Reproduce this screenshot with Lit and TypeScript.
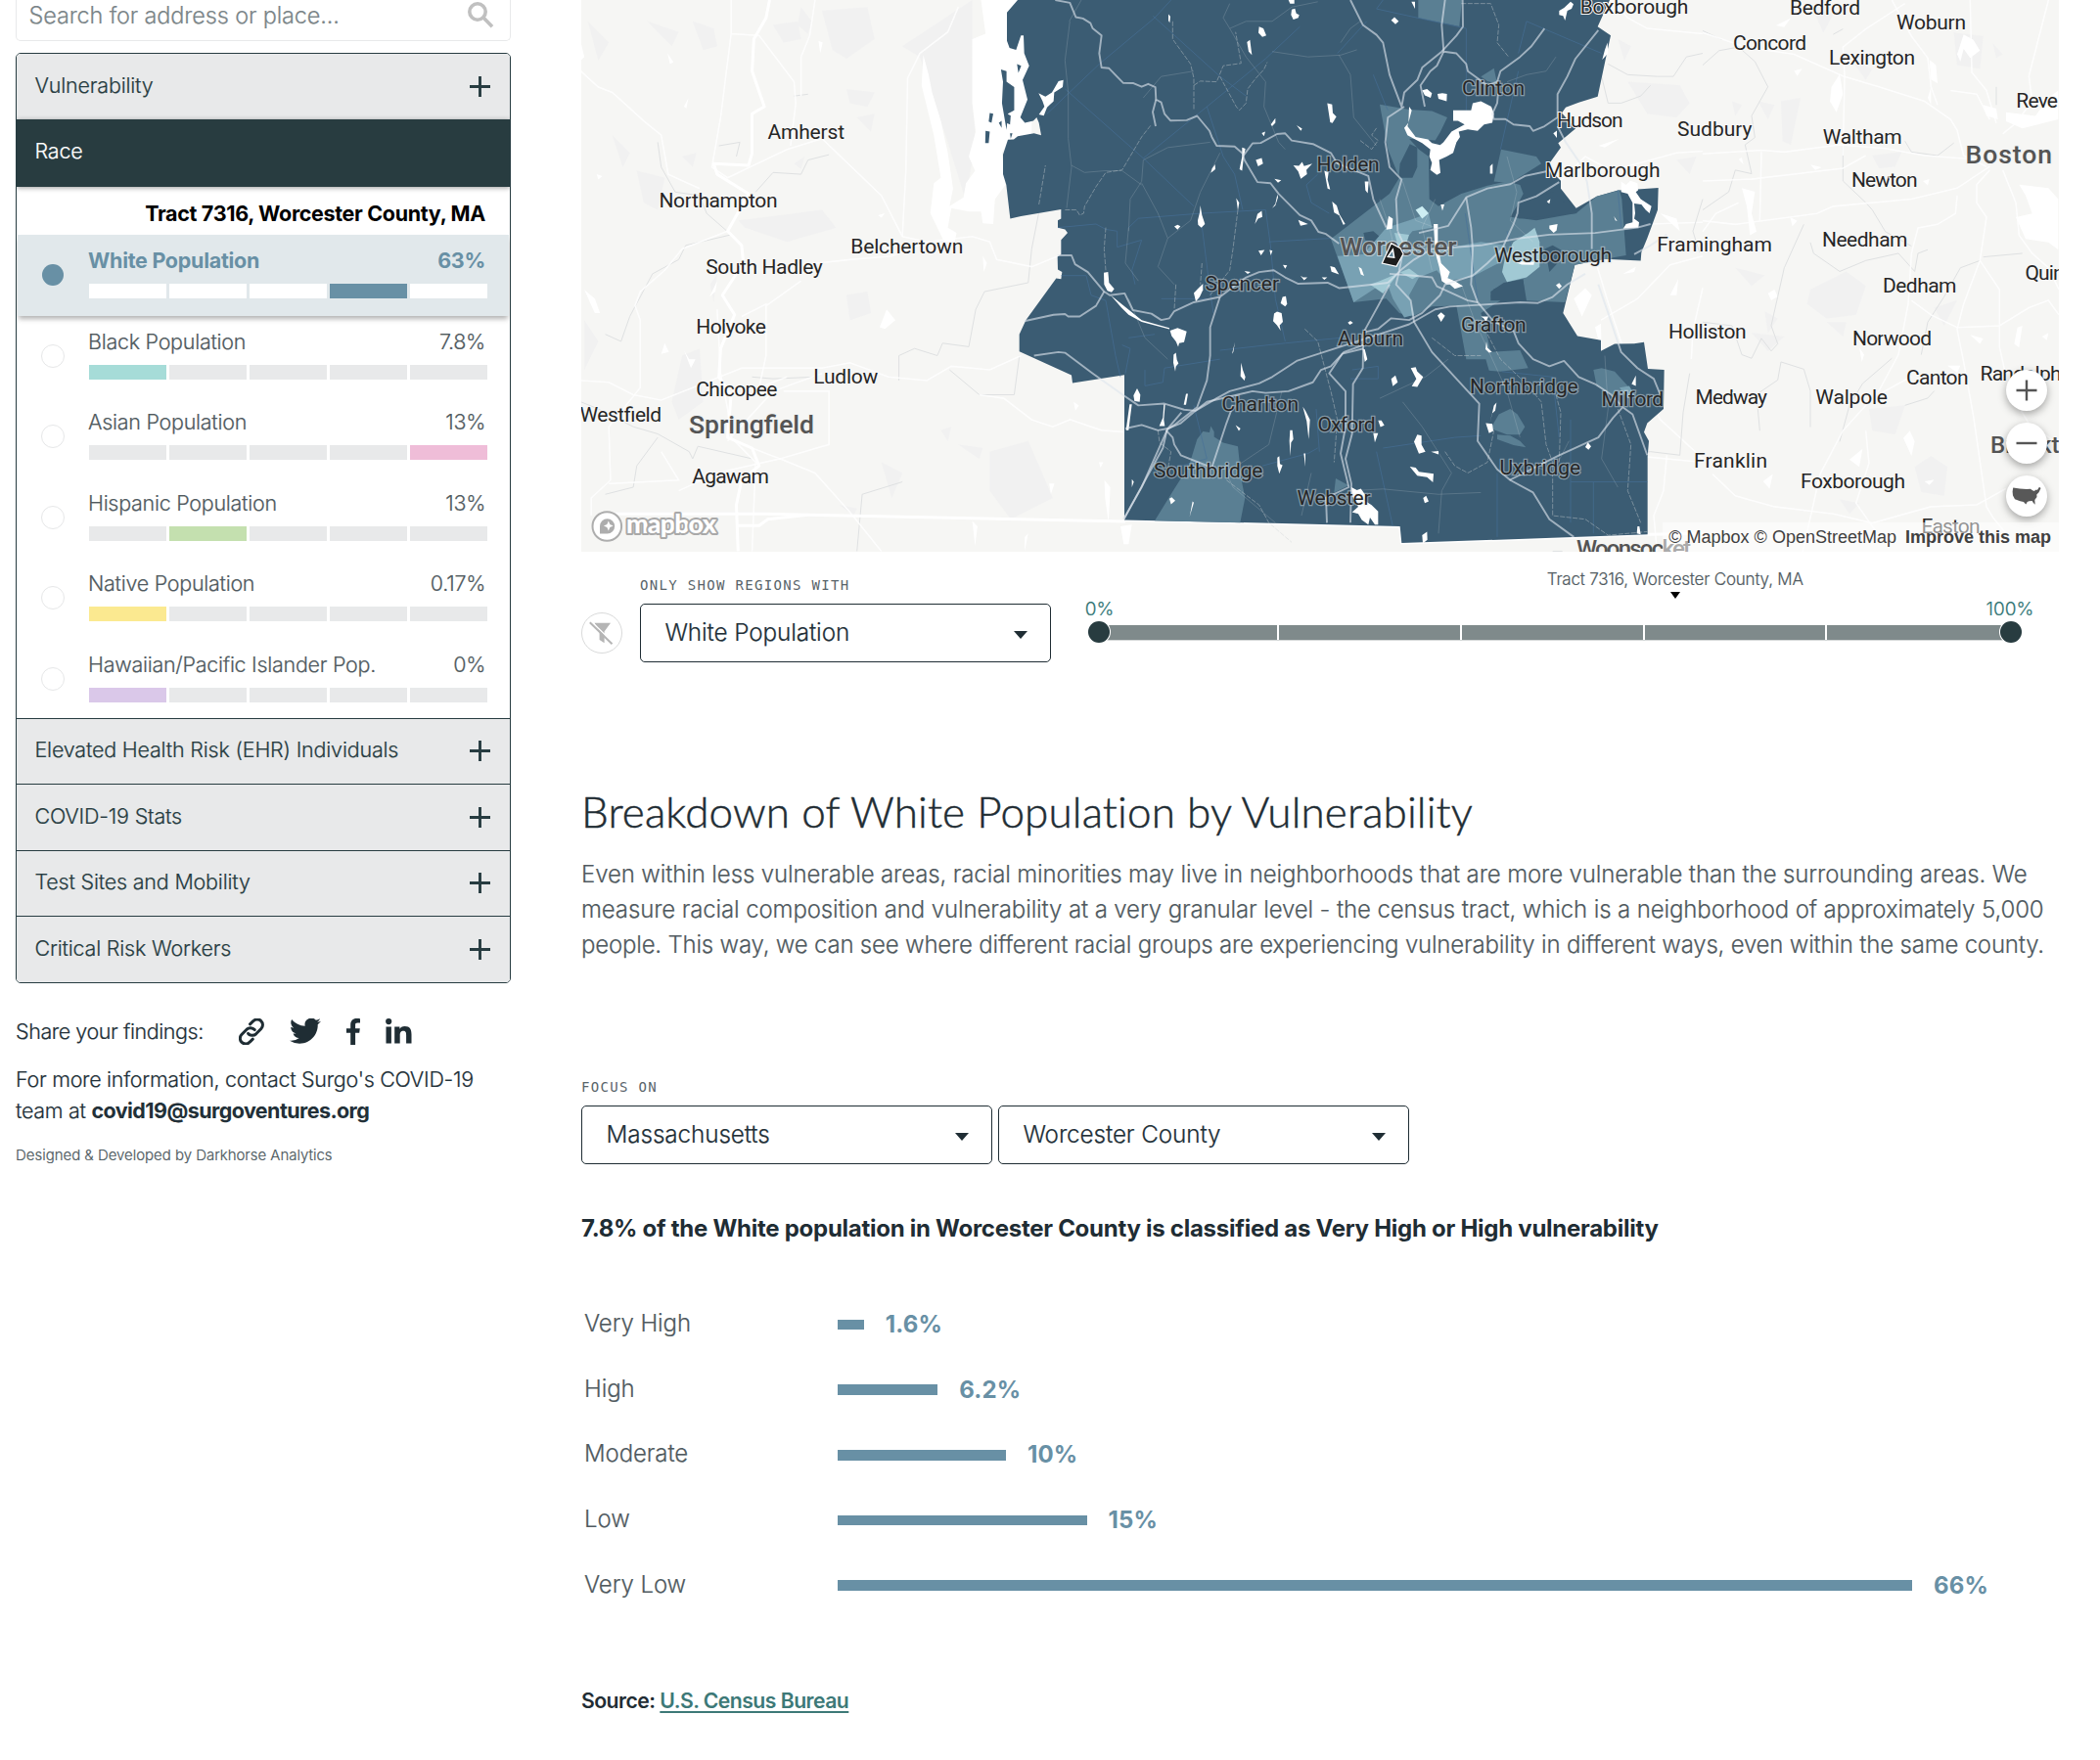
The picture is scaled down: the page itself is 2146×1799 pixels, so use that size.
import { LitElement, html, svg, css } from "lit";
import { customElement, property } from "lit/decorators.js";
import { classMap } from "lit/directives/class-map.js";

/* ---------- data ---------- */

interface Indicator {
  name: string;
  value: string;
  bucket: number;
  color: string;
  selected?: boolean;
}

const indicators: Indicator[] = [
  { name: "White Population", value: "63%", bucket: 3, color: "#6890a5", selected: true },
  { name: "Black Population", value: "7.8%", bucket: 0, color: "#a6dcd8" },
  { name: "Asian Population", value: "13%", bucket: 4, color: "#efbdd8" },
  { name: "Hispanic Population", value: "13%", bucket: 1, color: "#c4e0af" },
  { name: "Native Population", value: "0.17%", bucket: 0, color: "#fbe990" },
  { name: "Hawaiian/Pacific Islander Pop.", value: "0%", bucket: 0, color: "#dac8e9" },
];

const closedSections = [
  "Elevated Health Risk (EHR) Individuals",
  "COVID-19 Stats",
  "Test Sites and Mobility",
  "Critical Risk Workers",
];

const breakdown = [
  { label: "Very High", value: "1.6%", width: 26.7 },
  { label: "High", value: "6.2%", width: 102.3 },
  { label: "Moderate", value: "10%", width: 172 },
  { label: "Low", value: "15%", width: 254.5 },
  { label: "Very Low", value: "66%", width: 1098 },
];

/* name, left, baseline, width */
type Label = [string, number, number, number];

const towns: Label[] = [
  ["Amherst", 784.5, 142, 78.5], ["Northampton", 673.5, 211.7, 121], ["Belchertown", 869.3, 258.7, 115],
  ["South Hadley", 721.3, 280, 119.5], ["Holyoke", 711.3, 341, 71.5], ["Ludlow", 831.3, 391.8, 66],
  ["Chicopee", 711.3, 404.5, 83], ["Westfield", 592.5, 431, 83.5], ["Agawam", 707.3, 494, 78.5],
  ["Boxborough", 1614.8, 13.8, 110.5], ["Hudson", 1591, 130, 67.5], ["Marlborough", 1579, 181.3, 117.5],
  ["Framingham", 1693.3, 256.7, 117.5], ["Sudbury", 1714, 138.6, 76.5], ["Holliston", 1705, 346.3, 79.5],
  ["Medway", 1732.5, 412.7, 73.5], ["Franklin", 1731, 478.3, 75], ["Bedford", 1829, 15, 72],
  ["Woburn", 1938, 29.6, 71], ["Concord", 1771, 50.7, 75], ["Lexington", 1869, 66, 88],
  ["Reve", 2060.3, 110, 42.7], ["Waltham", 1862.7, 147.3, 81], ["Newton", 1892, 191.3, 67.5],
  ["Needham", 1862, 252, 87.5], ["Dedham", 1924, 299, 75.5], ["Quin", 2069.5, 286.3, 40],
  ["Norwood", 1893, 353, 81], ["Canton", 1948, 393.3, 63.5], ["Walpole", 1855.3, 412.7, 73.7],
  ["Randolph", 2023.5, 388.5, 83], ["Foxborough", 1840, 498.5, 107], ["Easton", 1963.5, 545, 60],
];

const countyTowns: Label[] = [
  ["Holden", 1345.5, 175, 64], ["Spencer", 1231.5, 297, 75.5], ["Charlton", 1248.5, 420, 78.5],
  ["Oxford", 1346.5, 441, 59], ["Southbridge", 1179, 488, 111.5], ["Webster", 1325.5, 516, 75],
  ["Auburn", 1367, 353, 67], ["Clinton", 1494, 97, 64], ["Westborough", 1527, 268, 120],
  ["Grafton", 1493, 339, 66.5], ["Northbridge", 1502, 401.5, 110.7], ["Milford", 1636.5, 415, 63.7],
  ["Uxbridge", 1532.5, 485.4, 82.7],
];

const cities: Label[] = [
  ["Springfield", 704, 443.3, 128], ["Worcester", 1369, 261, 119.5],
  ["Boston", 2008.5, 167, 88.5],
];

const smallCities: Label[] = [
  ["Woonsocket", 1611, 569, 117], ["Brockto", 2034, 463, 84],
];

/* ---------- map geometry ---------- */

const county =
  "M60,0L27,35V115L35,135 55,140 70,100H78L80,150 95,185 75,225 90,280 68,330 82,345 108,340 118,330 125,345 132,380 110,375 60,383 48,392 30,393 15,435V490L25,520 37,615 70,608 193,589V615L183,620V640L205,645 213,655 193,675V715L182,722 183,758 196,765 193,785 178,783 85,900 65,940V988L225,1055 228,1077 387,1054V1462L780,1470 1232,1480 1237,1527 1991,1503V1285L1995,1240 1980,1215 1990,1190 2040,1150 2042,1040 1992,1037 1980,962 1950,966 1890,967 1848,987V957L1776,945 1732,880 1768,745 1860,728 1970,733 1972,710 1990,670 2022,590 2024,528 1960,532 1900,535 1835,552 1772,585 1725,530V508L1682,470 1725,415 1717,402 1770,362 1728,318 1740,302 1780,288 1838,272 1865,155 1878,100 1838,75 1875,0Z";

const tractsMid = [
  "M1288,0H1422L1414,74 1288,50Z",
  "M1170,294L1260,308 1330,312 1377,330 1355,372 1340,395 1260,390 1290,420 1320,440 1322,560 1350,580 1420,545 1500,522 1560,510 1600,520 1610,545 1590,580 1570,610 1650,620 1772,600 1835,552 1905,535 1912,560 1925,718 1860,728 1768,745 1738,850 1620,845 1610,790 1520,812 1510,835 1540,845 1480,880 1495,925 1510,990 1600,985 1625,1035 1540,1045 1505,1042 1495,1010 1435,1010 1405,860 1330,862 1270,890 1230,880 1190,840 1090,850 1020,672 1200,545 1230,500 1195,420Z",
  "M1542,420L1650,440 1665,460 1570,515 1520,510Z",
  "M1480,215L1520,192 1530,235 1500,228Z",
  "M610,1235L628,1213 648,1216 652,1198 662,1214V1228L690,1245 735,1255 746,1350 757,1400 742,1470 480,1464 540,1375 585,1310Z",
  "M1825,1040L1850,1035 1890,1045 1935,1090 1920,1110 1880,1110 1835,1085Z",
  "M1510,1205L1535,1165 1570,1150 1592,1165 1615,1200 1600,1222 1560,1222Z",
  "M1530,1222L1570,1225 1600,1240 1618,1258 1580,1252 1530,1235Z",
  "M1035,1345L1075,1365 1030,1385Z",
];

const tractsLight = [
  "M1040,720L1120,715 1190,640 1260,620 1320,600 1330,640 1270,650 1235,690 1360,700 1480,680 1555,690 1545,735 1450,780 1370,790 1345,760 1290,780 1260,830 1275,885 1245,893 1210,840 1190,790 1090,850Z",
  "M1905,1090L1935,1085 1950,1110 1930,1120Z",
];

const tractsPale = [
  "M1555,720L1580,680 1625,655 1645,640 1660,680 1660,750 1620,780 1560,793 1545,765Z",
  "M1140,800L1170,790 1260,755 1290,775 1270,785 1230,765 1180,825Z",
  "M1215,655L1260,660 1250,690 1225,690Z",
];

const tractsDark = [
  "M1228,500L1232,460 1262,405 1285,415 1285,470 1270,500Z",
  "M1120,655L1150,650 1175,670 1160,690 1125,675Z",
  "M1675,700L1700,690 1730,705 1720,735 1690,765 1685,740Z",
  "M1510,820L1550,795 1610,785 1615,845 1510,845Z",
  "M1595,615L1610,560 1660,550 1700,540 1775,600Z",
];

const tractLines = [
  "M150,320L310,180 480,50 530,0", "M475,45L680,215 760,270", "M205,250L445,445 600,580",
  "M445,445L640,300 820,165 925,75", "M640,300L690,440 725,490 750,590", "M183,640L300,630 330,645 365,650V695L440,675 410,760 420,800",
  "M400,640L430,614 620,600 820,590", "M620,600L650,820 660,880", "M193,775H270L285,830 330,845 360,1000 375,1060",
  "M380,970L405,980 390,1050", "M450,1040V1085L505,1075 510,1035 680,1010", "M680,985L880,965 1050,950",
  "M820,590L835,690 850,840 880,960", "M830,680L1020,670", "M1150,210L1185,290 1195,310", "M1180,0L1160,25 1435,80V310",
  "M1130,60L1040,150", "M1595,150L1620,60 1850,150", "M1595,200L1540,420", "M400,950L480,940M500,840H640",
  "M600,1140L640,1290 520,1320M810,1310L950,1275 980,1260", "M975,1150L985,1270M1085,1040L1165,1030V1065H1080",
  "M1755,1180V1470M1755,1355H1990M1825,1355V1500", "M1530,1330V1510M1160,1270L1210,1480", "M1545,1045L1700,1060 1720,1230",
  "M1180,1260L1400,1230 1480,1225", "M1015,600L960,570 945,520 980,490", "M1900,535L1910,640M1560,650L1575,700 M1432,600L1470,840",
];

const minorRoads = [
  "M220,60L205,170 215,260 215,390 225,470 210,585", "M255,0L218,60M225,465L265,485 330,480 380,480 440,520",
  "M710,80L690,50 710,10M710,80L760,60 840,60 900,20 980,5", "M710,80L760,160 820,230 815,300 860,400 880,420",
  "M400,650L405,560 440,510 445,450 520,415 650,400", "M440,515L490,600 520,670 490,750 540,800", "M600,200L500,215 445,275",
  "M680,430L620,540 590,620 520,670", "M400,640L390,740 430,790 M400,840L450,950 520,1010",
  "M840,145L950,160 1050,155 1100,140", "M1045,155L1080,210 1090,330 1160,410", "M1050,120L1080,80 1110,60",
  "M700,1330L830,1250 870,1100", "M700,1330L720,1370 850,1470M960,1330L930,1450", "M1170,1120L1310,1060 1380,1010",
  "M1240,1130L1300,1200 1390,1330 1360,1380 1350,1500", "M1420,800L1460,900 1560,1100 1600,1230", "M1710,160L1680,200 1620,210 1560,230",
  "M1560,440L1590,540 1570,620 1640,680", "M1860,1000L1870,1150 1850,1290 1900,1370", "M1340,560L1300,640 1330,760", "M1170,560L1200,640 1230,760",
  "M1750,1240L1700,1330 1640,1310", "M1240,510L1280,620 1340,640", "M1080,1380L1180,1375 1350,1390 1480,1385",
];

const majorRoads = [
  "M175,0L220,8 238,48 260,52 283,65 290,80 317,100 310,150 317,190 340,192 383,233 415,234 440,244 460,236 482,245 484,280 500,288 510,320 528,339 578,338 610,326 648,368 655,385 670,410 725,412 750,432 755,450 795,512 835,515 860,545 925,605 960,620 982,652 1005,658 1045,685",
  "M484,280L474,315 483,355", "M750,440L780,403 805,402 855,377 880,375 900,395 965,405 1020,430 1040,460 1135,495 1150,560 1190,640",
  "M1080,0L1118,70 1160,98 1180,120 1200,210 1210,235 1237,300 1245,260 1285,225 1300,190 1360,145 1405,100 1425,75 1424,0",
  "M1370,0L1360,70 1366,145 1405,150 1435,180 1440,200 1500,240 1530,230 1540,200 1600,160 1635,130 1675,80",
  "M1366,145L1345,185 1325,200 1295,240 1308,300", "M1245,300L1195,330 1187,400 1200,470 1237,505 1220,560 1225,650",
  "M1840,85L1770,165 1745,215 1715,265V330L1675,355 1640,368 1630,355 1580,350 1555,335 1520,335 1515,320 1530,290 1535,240",
  "M182,718H225L236,743 275,765 325,820 342,830 388,825 413,872 470,882 500,900 525,895 540,875 600,850 680,835 760,780 800,765 845,760 880,780 920,798 1010,795 1045,810 1150,800 1195,795",
  "M80,903L170,885 205,883 215,890 250,890 300,860 325,820", "M110,1000L185,990 205,992 290,1050 385,1112 430,1140 510,1135 570,1152 605,1155 670,1120 710,1100 800,1078 840,1060 915,1015 1050,975 1200,930 1260,912 1340,870 1385,862 1465,858 1600,850 1655,852 1700,835 1745,800 1800,770",
  "M390,1205L440,1195 490,1210 520,1205 560,1190 605,1155 640,1130 780,1100 820,1105 890,1100 965,1075 990,1040 1020,1030 1060,990 1120,970",
  "M680,835L650,920 650,1000 640,1070 610,1145 540,1195 518,1208 505,1260 385,1460", "M562,1160L520,1205 440,1370 385,1460", "M515,1210L535,1230 540,1250 560,1280 655,1315 700,1190 720,1140",
  "M1200,800L1165,860 1120,935 1118,1035 1088,1080 1085,1220 1065,1290 1083,1360 1080,1470", "M1120,980L1055,995 1015,1050 1065,1100 1065,1200 1050,1275 1075,1370 1005,1400 1008,1470",
  "M1120,935L1165,925 1205,895 1260,900 1300,880 1355,830 1370,800 1455,775 1500,740 1545,700 1580,630 1592,600 1595,570 1650,552 1720,512",
  "M1195,795L1240,755 1275,730 1330,700 1480,690 1600,670 1690,660 1830,655 1960,640 2000,630",
  "M1225,650L1245,690 1230,760 1220,800 1265,845 1275,905 1330,990 1400,1060 1475,1135 1470,1240 1530,1320 1570,1350 1640,1385 1690,1460 1765,1510",
  "M1290,655L1380,635 1435,555 1500,530 1570,518 1615,495 1680,482", "M1435,555L1450,640 1455,700 1450,800 1470,850 1520,905 1580,930 1595,965 1640,1010 1690,1030 1735,1015 1780,1060 1830,1080 1880,1110 1910,1140",
  "M1568,1350L1720,1280 1840,1230 1885,1175 1915,1145 1945,1165 1990,1280", "M1715,355L1740,400 1785,460 1805,510 1820,600 1820,700",
  "M1950,715L2000,690 2050,660", "M1840,800L1870,880 1910,990 1960,1035 2010,1065 2030,1110", "M1200,770L1275,775 1330,780 1345,805 1440,845 1470,850",
];

const streams = [
  "M535,60V110L590,180 600,220 600,310", "M600,240L620,228 670,230 690,185 745,178 728,90", "M680,215L730,300 740,310 760,290 765,250 790,220 815,195 825,175",
  "M205,590H240L250,605 262,600 265,580 300,525 330,485 380,478 440,385 470,350", "M125,575L135,520 145,465", "M330,640L325,700 330,760",
  "M545,800L540,870M625,740L620,800", "M735,590L720,700 710,760 650,830", "M940,925L980,960 1000,1030 1020,1100 1040,1180 1030,1300",
  "M1110,395L1145,420 1165,395 1145,380 1160,360", "M1420,10H1510L1535,70 1530,120 1565,160", "M1500,940L1540,1010 1620,1080 1665,1130 1680,1250 1700,1300 1700,1450 1800,1460 1870,1505 1990,1495",
  "M1330,950L1400,1000 1480,1000", "M1710,1110L1725,1160 1720,1300M1900,1150L1940,1250 1930,1380 1970,1470", "M700,1350L800,1420 830,1470 900,1525", "M490,1210L495,1245 530,1270 520,1320",
  "M1370,1270L1400,1310 1440,1330 1500,1300 1520,1210",
];

const lakes = [
  "M522,40L528,46 526,64 522,58Z", "M900,27L910,24 914,38 923,42 920,50 905,55 898,42Z", "M890,0H908V10H895Z", "M800,75L813,80 822,100 810,104 798,92Z", "M763,118L772,112 778,155 768,145Z",
  "M1009,290L1024,294 1026,318 1037,328 1025,346 1018,344Z", "M836,350L850,332V345L840,355ZM808,374L819,370 815,383ZM915,352L932,362 928,368Z",
  "M124,262L145,272 165,260 185,228 200,225 198,245 172,260 170,285 150,302 140,325 125,322 142,300 136,284Z",
  "M748,415L758,418 753,440 748,480 740,476 748,440Z", "M790,450L808,444 812,460 797,468ZM652,486L656,474 665,462 666,476Z",
  "M905,465L922,466 932,455 938,467 963,460 945,478 947,490 928,503 920,482Z", "M1000,480L1013,485 1010,505 1018,533 1010,530Z",
  "M1024,567L1038,578 1046,602 1064,630 1058,632 1046,606 1030,598Z", "M1124,510L1136,510 1133,543 1126,535ZM847,503L868,507 858,514ZM840,585L850,573 856,547 858,555 850,578Z",
  "M730,557L739,570 735,592ZM787,630L795,602 808,593 810,610 797,615ZM920,618L950,630 927,635Z", "M540,637L550,632 559,636 550,646ZM612,620L618,598 620,578 625,605 634,630 623,640 613,632Z",
  "M798,705L817,703 806,718ZM832,703L841,705 836,718ZM873,745L886,746 880,756ZM755,762L774,765 765,770Z", "M324,767L337,765 340,795 356,812 348,822 335,818 325,800Z",
  "M600,824L612,812 628,798 628,815 618,835 606,848Z", "M527,930L550,922 578,932 574,948 570,962 555,965 552,975 545,960 532,945Z", "M538,997L545,992 548,1012 553,1022 545,1030 543,1045 537,1020Z",
  "M345,830L385,860 440,900 525,922 525,926 440,905 400,885 378,865Z", "M872,835L882,833 886,855 880,862 866,853ZM846,882L855,876 869,880 873,905 863,915 866,930 855,915 843,903Z",
  "M927,775L935,780 948,780 938,788ZM992,780L1009,780 1000,787ZM1018,748L1032,752 1045,772 1022,764Z", "M415,1112L426,1092 436,1110 434,1130 418,1128ZM403,1137H410L404,1180 400,1210H392Z",
  "M508,1137H512L508,1180 511,1198 494,1198 505,1175ZM576,1107H582L576,1138H569Z", "M717,995L726,962 721,990ZM745,1020L750,1040 758,1060 755,1070 743,1058Z",
  "M934,1144L942,1155 956,1180 952,1235 946,1185Z", "M895,1210H902L905,1235 898,1245 896,1283 893,1240ZM856,1287L862,1283 864,1305 872,1308 862,1332 856,1310ZM937,1275H942V1312Z", "M728,1195L743,1205 738,1212Z",
  "M1165,1182L1175,1182 1184,1196 1172,1201ZM1150,1218H1165L1155,1244Z", "M1083,1370L1100,1378 1112,1374 1126,1392 1124,1408 1145,1420 1165,1438V1475H1155L1140,1455 1135,1475 1115,1462 1104,1445 1085,1440 1104,1425 1085,1394Z",
  "M525,1402L532,1398 543,1408 530,1418ZM410,1347L416,1355 410,1370ZM596,1410L600,1413 587,1453Z", "M1072,907L1080,902 1088,908 1078,913ZM1118,982H1124L1132,1010 1124,1018Z",
  "M1197,607L1210,615 1208,643 1190,646Z", "M1205,57L1215,48 1228,60 1218,68ZM1267,5H1278V25Z",
  "M1260,300L1258,345 1245,360 1255,380 1300,402 1325,420 1322,440 1330,458 1325,478 1345,492 1356,486 1352,450 1375,440 1395,430 1405,400 1416,385 1412,370 1440,364 1470,368 1490,350 1515,345 1520,320 1512,300 1480,285 1455,290 1450,310H1395V340H1410L1430,350 1390,370 1365,400 1355,408 1330,402 1318,392 1280,385 1255,355 1268,310Z",
  "M1300,254L1315,250 1330,262 1326,275 1308,268ZM1347,264L1362,262 1376,264 1375,285 1350,278Z", "M1720,30L1735,22 1755,5 1764,12 1758,25 1745,30 1738,58 1732,45 1720,42Z", "M1508,468L1516,460V488H1508Z",
  "M1357,575H1368L1362,593ZM1335,630H1348V690L1358,740 1385,765 1378,782 1400,790 1425,805 1400,812 1385,800 1375,800 1360,790 1352,750 1340,710Z", "M1682,567L1693,560 1690,573Z", "M1690,634L1715,630 1712,648 1703,655 1690,643Z",
  "M1702,375L1713,367V388Z", "M1105,750L1114,755 1122,776 1112,772Z", "M1588,738L1600,734 1620,738 1644,736 1642,745 1605,744Z",
  "M1910,510L1925,520 1938,508 1960,515 1962,535 1955,540 1970,560 2003,580 1997,600 1985,590 1972,575 1950,572 1953,600 1950,615 1965,625 1963,640 1916,643 1925,630 1945,625 1945,570 1930,545 1910,540Z",
  "M1852,168L1860,140 1868,120 1870,150ZM1888,608L1898,622 1892,620Z", "M1347,887L1358,878 1370,888 1358,905Z", "M1710,802L1720,796 1728,805 1720,812Z", "M1480,890H1503L1496,905 1488,895ZM1497,960L1500,978 1514,990 1505,992 1494,982Z",
  "M1265,1035L1280,1032 1285,1045 1303,1060 1285,1088 1268,1086 1282,1065ZM1205,1065L1218,1056 1225,1075 1210,1086Z", "M1508,1190L1520,1140 1528,1132 1524,1155 1514,1163Z", "M1495,1190L1515,1192 1518,1212 1505,1218Z",
  "M1275,1242L1285,1222 1298,1225V1250L1310,1270 1290,1276ZM1327,1270L1350,1268V1278Z", "M1262,1312L1280,1315 1290,1327 1335,1332 1333,1356 1315,1342 1285,1338Z",
  "M1800,1257L1808,1244 1818,1255 1810,1265ZM1303,1400L1312,1394 1320,1410 1308,1415Z", "M1300,1505L1315,1495 1316,1518 1302,1528Z", "M1942,1080L1955,1056V1085ZM1960,1480H1966L1970,1503 1958,1500Z",
];

const tract = "M1177,740L1205,684 1233,698 1242,714 1221,749Z";

/* basemap outside the county */
const quabbin =
  "M1155,0L1260,0 1300,60V400H1230L1215,430 1225,520 1195,560 1190,630 1160,628 1155,595 1120,595 1070,585 1060,640 1085,655 1080,680H1050L1010,600 1020,515 1040,500 1020,380 985,240 990,155 1005,210 1015,260 1040,340 1060,430 1075,530 1065,580 1105,555 1112,515 1138,480 1120,440 1140,370 1130,290V110L1168,95Z";

const islands = [
  "M1212,195L1228,200 1228,230 1250,245V310L1232,320 1228,365 1215,290 1218,230Z", "M1180,318L1190,320 1185,345 1177,342Z", "M1168,368L1180,370 1177,402H1167Z", "M1230,320L1240,325 1238,350 1227,345Z",
  "M1258,180L1270,185 1262,205ZM1238,375H1245L1240,390Z", "M1206,345L1214,340V360Z",
];

const patchesWest = [
  "M330,60L390,80 400,130 360,140ZM700,30L830,20 850,110 770,165 730,140ZM930,130L1130,0V280L1140,400 1110,560 1060,400 980,160Z",
  "M170,480L250,500 230,590 190,570ZM100,380L150,430 130,470ZM460,620L700,590 740,640 600,680 480,640Z", "M20,900L60,960 20,1040ZM300,1000L350,980 360,1130 290,1180 270,1130Z",
  "M770,830L830,820 840,880 780,900ZM1180,1270L1290,1240 1330,1330 1360,1400 1240,1460 1180,1380ZM1090,1250L1160,1260 1150,1290ZM1040,1210L1070,1200 1060,1240Z",
  "M560,70L630,60 640,110 590,120ZM640,20L670,60 660,95 630,70ZM30,60L90,120 60,170ZM200,60L290,90 270,130ZM300,440L340,430 330,470ZM620,460L650,440 640,475Z",
  "M770,250L850,260 830,300 780,290ZM800,330L850,320 840,370ZM380,800L400,770 390,850ZM870,1300L930,1330 900,1400ZM750,1420L800,1430 790,1450Z",
];

const patchesEast = [
  "M240,280L300,270 270,400 245,390ZM170,280L220,290 200,330ZM770,90L860,100 850,190 780,180ZM520,430L610,420 590,460 540,465Z",
  "M330,800L440,750 500,790 470,870 380,880 320,840ZM380,890L440,890 430,930ZM190,860L230,880 200,920ZM510,1130L620,1120 590,1200 520,1190Z",
  "M650,1290L700,1260 750,1290 740,1370 670,1360ZM710,850L780,830 740,900ZM100,740L190,760 150,790ZM150,920L250,930 200,970Z",
  "M330,10L400,40 370,90ZM460,170L520,190 500,220ZM90,280L120,290 100,320ZM890,120L920,150 900,160ZM420,1380L480,1390 450,1420Z",
];

const watersWest = [
  "M690,115L702,120 695,150ZM258,150L275,175 265,180ZM305,300L318,275 312,305ZM20,815L50,840 65,880 50,880ZM378,835L400,790 395,820ZM865,920L885,870 910,900 880,925Z",
  "M240,995L250,965 262,990ZM305,985L325,1035 338,1010 320,1010ZM1508,1350L1525,1370 1520,1470 1510,1400ZM1350,1360H1365L1355,1390ZM860,605L880,600 870,612ZM10,120L20,160 10,170Z",
  "M1160,720L1172,740 1163,765ZM1420,1130L1435,1140 1425,1155ZM1492,1300L1505,1300 1497,1315ZM1130,1465L1145,1480 1138,1535ZM1280,1510L1290,1500 1280,1550ZM55,490L72,495 60,505Z",
];

const watersEast = [
  "M395,240L420,205 430,260 410,310 390,280ZM280,195L305,190 290,210ZM225,70L270,50 250,75ZM780,150L800,95 830,110 850,140 820,160 800,135 790,170Z",
  "M695,165L715,180 720,230 700,220ZM690,270L700,240 700,290ZM860,290L900,300 905,330 870,320ZM970,510L1060,520 1090,550V690L1060,670 990,660 960,600 1010,590 990,540Z",
  "M930,310L1020,320 1060,270 1090,250V330L980,355 930,335ZM120,520L160,530 150,590 165,640 145,650 135,570ZM200,810L220,800 230,820 210,830ZM480,960L495,980 488,1000Z",
  "M615,1210L635,1190 650,1220 640,1260ZM450,1270L490,1240 480,1290ZM185,1330L215,1310 205,1350ZM820,925L860,935 850,950ZM965,905L980,900 970,960 955,950ZM330,455L365,462 345,470Z",
  "M750,1010L790,1010 780,1030ZM1040,930L1060,920 1055,940ZM680,1330L710,1325 695,1340ZM268,600L290,610 275,625ZM110,440L120,435 125,455ZM675,500L695,495 690,512Z",
];

const roadsWest = [
  "M440,0V95L410,330 385,470 430,500 600,420 700,390 870,550 930,665 1000,680M440,95L520,100 620,230 625,290 610,410", "M10,200L60,245 100,260 190,340 240,380 260,490 350,530",
  "M680,0L665,100 640,160 640,270M1090,20L1060,90 980,150 945,220 940,480 930,665", "M10,1070L90,1075 160,1110 240,1125 330,1090 470,1035 700,1035 780,1020 890,1060 1000,1070 1070,1030 1180,1040 1270,1000",
  "M430,650L300,700 250,760 180,820 165,860 180,900V1090L90,1200 95,1350 40,1400 40,1450", "M640,745L780,730 900,720 1000,680 1130,665 1180,680 1200,730 1300,750 1375,720",
  "M400,870L410,1050 430,1150 440,1230 510,1300 500,1550", "M540,860L640,790M470,890L540,855V1000L520,1090 600,1060", "M430,1240L560,1100 700,1050M500,1260L580,1290 720,1250V1100L590,1100",
  "M240,1270L290,1350 90,1360M290,1380L400,1330 580,1290 680,1330 780,1440 870,1550", "M1150,1110L1220,1120 1300,1180 1360,1200 1410,1180 1500,1210 1568,1215",
];

const borderWest = [
  "M550,0L540,50 505,110 500,200 535,300 500,320 500,430 490,465 390,460 400,490 490,545 430,650 470,690 475,740 415,830 450,885 410,980 405,1060 440,1110 430,1230 500,1260 520,1310 470,1350 455,1420 460,1550",
  "M90,1445L540,1445 660,1448 1568,1466", "M455,1478L520,1478 545,1460 660,1448",
];

const dashWest = [
  "M230,400L240,470 280,540 350,550 370,600 440,660 310,690 290,730 215,770 150,890 125,960 80,940", "M510,540L560,485 640,490 660,450 720,435", "M620,270L660,265M405,410L465,400 455,440",
  "M10,1130L60,1150 160,1200 230,1220 320,1270 330,1290 345,1255 500,1290M230,1230L170,1310 160,1370 80,1390",
  "M500,1060L560,1065 680,1060M920,1070V1000L965,980 1030,1000 1045,965 1120,975 1140,870 1165,820 1290,795 1300,700 1320,600", "M1265,1000L1250,1110 1150,1110 1065,1040M800,1550L815,1390 930,1355",
];

const roadsEast = [
  "M0,90L130,130 280,150 430,210 540,240 680,280 760,330 780,360 800,430 870,460", "M430,430L435,210 430,130 500,80 620,10", "M580,0L640,100 690,160 700,240 720,290",
  "M820,0L825,200 870,250 900,340M1060,0L1000,210 1010,280 960,340 920,370M760,250L840,260 880,330", "M0,425L180,415 250,420 420,400 560,410 680,430 830,440",
  "M0,500L150,495 430,465 500,430M0,610L100,620 350,590 400,570 640,550 780,520 880,460", "M780,540L775,590 720,620 660,630 640,700 630,840 600,980 540,1080 430,1190 360,1310 300,1550",
  "M880,470L840,510 840,560 870,600 850,720 800,840 780,910 800,1000 830,1150 870,1400 890,1430 1000,1550", "M920,470L960,560 970,650 1010,700 1060,740 1092,800",
  "M640,830L700,870 780,905 910,900 1000,850 1060,830 1092,870M850,720L880,760 910,800 910,960", "M0,640L40,590 110,560M30,1310L100,1370 220,1400 400,1420 520,1445 700,1400 840,1395 930,1350",
  "M500,1190L510,1280 470,1390 540,1480M540,1090L640,1040M180,420L175,610", "M910,960L940,1080 1000,1170 1080,1220",
];

const dashEast = [
  "M0,85L60,110M0,180L50,140 110,130 160,170 200,240 150,320 160,380 130,400 150,480 100,470 80,530 0,580", "M310,620L250,740 230,820 210,900 230,950 210,970 180,935 150,990 120,980 90,900 0,890",
  "M330,670L340,700 420,750 500,720 600,700 650,750 660,700 690,690", "M430,400L430,500 500,560 520,580 560,640 640,680", "M850,720L790,740 740,820 690,890 670,980M860,710L980,700",
  "M420,1220L450,1120 490,1060 580,990M620,1120L690,1100 710,1080M240,1000L230,1050 165,1090 175,1190M240,1000L310,1020 330,1080 330,1180", "M430,80L400,95M620,390L640,420 720,430 770,395M900,240V290",
];

/* roads just east of the county, in county units */
const roadsSeam = [
  "M1878,0L1930,50 1990,80 2160,95", "M1725,508L1800,440 1880,480 2080,430 2160,425", "M2000,630L2160,625", "M1820,700L1870,850 1920,990", "M1848,900L1960,840 2060,745 2160,720",
  "M1950,1040L2030,1180 2090,1230 2160,1290M2050,1280L2040,1380 2010,1450 2020,1550", "M2160,810L2130,930 2125,1010", "M1990,1285L2160,1300",
];

const dashSeam = ["M1870,180L1930,210 2020,215 2070,215 2110,160 2160,150", "M1850,215L1870,290 1910,290 1970,270 2000,240", "M2160,560L2130,650 2150,710", "M1940,1280L2000,1270 2090,1280 2100,1160 2120,1050", "M1730,1550L1700,1550"];

const paths = (list: string[], cls: string) => list.map((d) => svg`<path class=${cls} d=${d}></path>`);
const labels = (list: Label[], cls: string) =>
  list.map(([t, x, y, w]) => svg`<text class=${cls} x=${x} y=${y} textLength=${w}>${t}</text>`);

@customElement("region-map")
export class RegionMap extends LitElement {
  static styles = css`
    :host { display: block; position: relative; height: 564px; overflow: hidden; background: #f6f6f4; }
    .canvas { display: block; width: 1510px; height: 564px; }
    path { vector-effect: non-scaling-stroke; }
    .patch { fill: #efeff0; opacity: 0.75; }
    .water { fill: #fff; }
    .road { fill: none; stroke: #fff; stroke-width: 1.6; opacity: 0.85; }
    .wide { fill: none; stroke: #fff; stroke-width: 3; stroke-linejoin: round; }
    .dash { fill: none; stroke: #dfe1e2; stroke-width: 1; }
    .county { fill: #3b5c73; }
    .mid { fill: #5a7f93; }
    .light { fill: #78a1b3; }
    .pale { fill: #a1c9d4; }
    .bright { fill: #cdeef3; }
    .line { fill: none; stroke: #47719a; stroke-width: 1; opacity: 0.6; }
    .minor { fill: none; stroke: #fff; stroke-width: 1; opacity: 0.15; }
    .major { fill: none; stroke: #dfe6ee; stroke-width: 1.9; opacity: 0.62; stroke-linejoin: round; }
    .stream { fill: none; stroke: #cfd4d6; stroke-width: 1; opacity: 0.42; stroke-dasharray: 5 1.5; }
    .tract { fill: #1d1d1d; stroke: #fff; stroke-width: 1.2; }
    .hole { fill: #5a7f93; stroke: #fff; stroke-width: 1.5; }
    text { font-family: Roboto, "Liberation Sans", sans-serif; }
    .town { font-size: 21px; fill: #262626; stroke: #f8f8f7; stroke-width: 2px; paint-order: stroke; }
    .inner { font-size: 21px; fill: #262626; stroke: rgba(225, 230, 232, 0.45); stroke-width: 2.6px; paint-order: stroke; }
    .city { font-size: 26.5px; font-weight: 500; fill: #545454; stroke: rgba(235, 238, 240, 0.6); stroke-width: 2px; paint-order: stroke; }
    .small-city { font-size: 24px; font-weight: 500; fill: #545454; }
    .logo-text { font-family: Lato, sans-serif; font-size: 27px; font-weight: 900; fill: #fff; stroke: #a9a9a9; stroke-width: 4px; paint-order: stroke; stroke-linejoin: round; }
    .logo-ring { fill: #fff; stroke: #adadad; stroke-width: 2; }
    .logo-mark { fill: #adadad; }
    .controls { position: absolute; right: 12px; top: 378px; display: flex; flex-direction: column; gap: 12px; }
    .control { width: 42px; height: 42px; border: 0; padding: 0; border-radius: 50%; background: #fff; box-shadow: 0 3px 9px rgba(0, 0, 0, 0.35); display: flex; align-items: center; justify-content: center; }
    .glyph { fill: none; stroke: #555; stroke-width: 2.4; }
    .usa { fill: #585858; }
    .credits { position: absolute; right: 0; bottom: 0; height: 30px; width: 397px; padding-right: 8px; display: flex; align-items: center; justify-content: flex-end; gap: 9px; background: rgba(255, 255, 255, 0.5); font: 18px "Liberation Sans", sans-serif; line-height: 30px; color: #404040; white-space: nowrap; }
    .improve { font-weight: 700; }
  `;

  render() {
    return html`
      <svg class="canvas" viewBox="594 0 1510 564">
        <g transform="translate(590 0) scale(.357143 .3635)">
          ${paths(patchesWest, "patch")}${paths([quabbin], "water")}${paths(watersWest, "water")}
          ${paths(dashWest, "dash")}${paths(roadsWest, "road")}${paths(borderWest, "wide")}
        </g>
        <g transform="translate(1740 0) scale(.33333 .36994)">
          ${paths(patchesEast, "patch")}${paths(watersEast, "water")}${paths(dashEast, "dash")}${paths(roadsEast, "road")}
        </g>
        <g transform="translate(1020 0) scale(.33333 .3635)">
          ${paths(["M1930,230L2090,240 2120,290 2080,330 1990,320ZM1900,110L1940,130 1920,170ZM2080,450L2140,440 2120,490Z"], "patch")}
          ${paths(["M375,1480L410,1475 400,1530 385,1530ZM1765,840L1800,810 1820,830 1790,890ZM1830,920L1848,910 1850,990ZM2030,600L2080,615 2090,650ZM2060,830L2085,785 2080,830ZM1915,770L1955,750 1950,765ZM1840,410L1905,390 1860,415Z"], "water")}
          ${paths(roadsSeam, "road")}${paths(dashSeam, "dash")}
          ${paths(["M387,1462L1232,1480 1237,1527 1991,1503 2160,1500"], "wide")}
          ${paths([county], "county")}
        </g>
        <g transform="translate(590 0) scale(.357143 .3635)">${paths(islands, "county")}</g>
        <g transform="translate(1020 0) scale(.33333 .3635)">
          ${paths(tractsMid, "mid")}${paths(tractsDark, "county")}${paths(tractsLight, "light")}${paths(tractsPale, "pale")}
          ${paths(["M1280,590L1300,580 1320,600 1300,615Z"], "bright")}
          ${paths(tractLines, "line")}${paths(minorRoads, "minor")}${paths(streams, "stream")}
          ${paths(lakes, "water")}${paths(majorRoads, "major")}
        </g>
        ${labels(towns, "town")}${labels(countyTowns, "inner")}${labels(cities, "city")}${labels(smallCities, "small-city")}
        <g transform="translate(1020 0) scale(.33333 .3635)">
          ${paths([tract], "tract")}${paths(["M1195,722L1210,702 1214,724Z"], "hole")}
        </g>
        <circle class="logo-ring" cx="620.3" cy="538" r="14.8"></circle>
        <path class="logo-mark" d="M613 545.5v-7.5a7.6 7.6 0 1 1 7.6 7.5z"></path>
        <path class="water" d="M621.8 532.6l1.5 3.4 3.4 1.5-3.4 1.5-1.5 3.4-1.5-3.4-3.4-1.5 3.4-1.5z"></path>
        <text class="logo-text" x="640" y="545" textLength="92">mapbox</text>
      </svg>
      <div class="controls">
        <button class="control"><svg class="glyph" width="22" height="22"><path d="M11 .5v21M.5 11h21"></path></svg></button>
        <button class="control"><svg class="glyph" width="22" height="22"><path d="M.5 11h21"></path></svg></button>
        <button class="control"><svg class="usa" width="30" height="20" viewBox="0 0 30 20"><path d="M1.2 1.5L8 2.6 15 3l4-.2 2 1.4 2 .8 1-1.2h2l2-3 1.5 1.2-2 4.3-2.2 2.2.2 2.6-2.2 3 .4 4.6-2-2-1-1.8-3.2.4-1.8.8-1.4 2.4-2.4-2.6-3.5-.6L3 13.2 1 9.5.6 5.6z"></path></svg></button>
      </div>
      <div class="credits"><span>© Mapbox © OpenStreetMap</span><span class="improve">Improve this map</span></div>
    `;
  }
}

@customElement("select-box")
export class SelectBox extends LitElement {
  @property() value = "";
  static styles = css`
    :host { box-sizing: border-box; display: flex; align-items: center; justify-content: space-between; width: 420px; height: 60px; padding: 0 23px 2px 24.5px; border: 1px solid #1f2d34; border-radius: 5px; color: #223038; font-size: 24.3px; font-weight: 300; letter-spacing: -0.12px; -webkit-text-stroke: 0.2px currentColor; }
    .caret { width: 0; height: 0; margin-top: 5px; border: 7px solid transparent; border-top: 8px solid #1f2d34; border-bottom: 0; }
  `;
  render() {
    return html`<span>${this.value}</span><span class="caret"></span>`;
  }
}

@customElement("app-root")
export class AppRoot extends LitElement {
  static styles = css`
    :host { display: block; font-family: Inter, "Liberation Sans", sans-serif; background: #fff; }
    .page { display: grid; grid-template-columns: 506px 1510px; column-gap: 72px; padding-left: 16px; height: 1799px; overflow: hidden; align-items: start; }
    .sidebar { display: flex; flex-direction: column; font-weight: 300; font-size: 21.5px; -webkit-text-stroke: 0.2px currentColor; }

    .search { box-sizing: border-box; height: 42px; border: 1px solid #e8e9ea; border-top: 0; border-radius: 0 0 5px 5px; display: flex; justify-content: space-between; padding: 0 16px 0 12.5px; color: #7b8588; font-size: 23.5px; letter-spacing: -0.15px; line-height: 31px; }
    .lens { fill: none; stroke: #c0c0c0; stroke-width: 3.6; margin-top: 2px; }

    .accordion { box-sizing: border-box; margin-top: 12px; height: 951px; border: 1px solid #273c41; border-radius: 5px; overflow: hidden; letter-spacing: -0.28px; }
    .head { box-sizing: border-box; height: 67.5px; padding: 0 20px 4px 18.5px; display: flex; align-items: center; justify-content: space-between; background: #e8e9ea; color: #273c41; border-top: 1px solid #273c41; letter-spacing: -0.2px; position: relative; }
    .head.first { border-top: 0; height: 67px; padding-bottom: 3px; }
    .head.open { border: 0; height: 69px; padding-bottom: 5px; background: #283c40; color: #fff; box-shadow: 0 1px 5px rgba(0, 0, 0, 0.4); }
    .plus { fill: none; stroke: #273c41; stroke-width: 2.9; margin-top: 3px; }
    .region { height: 49px; box-sizing: border-box; padding: 11.5px 25px 0 0; text-align: right; line-height: 30px; font-weight: 700; color: #000; letter-spacing: -0.33px; -webkit-text-stroke: 0; }
    .indicators { height: 493.8px; }
    .indicator { display: grid; grid-template-columns: 25px 407px; column-gap: 24px; height: 82.5px; box-sizing: border-box; margin: 0 1px; padding: 11px 0 0 24px; color: #505a60; }
    .indicator.on { background: #e1e8eb; color: #6890a5; font-weight: 700; box-shadow: 0 4px 5px -1px rgba(0, 0, 0, 0.3); position: relative; -webkit-text-stroke: 0; }
    .radio { box-sizing: border-box; width: 24px; height: 24px; margin-top: 18px; border: 1px solid #e6e7e8; border-radius: 50%; background: #fff; }
    .on .radio { width: 22px; height: 22px; margin: 19px 1px 0; border: 0; background: #6890a5; }
    .names { display: flex; justify-content: space-between; line-height: 30px; padding-right: 2px; margin-left: -1px; white-space: nowrap; }
    .scale { display: grid; grid-template-columns: repeat(5, 79px); column-gap: 3px; margin-top: 9px; }
    .cell { height: 15px; background: #e8e9ea; }
    .on .cell { background: #fff; }

    .share { display: flex; align-items: center; height: 30px; margin-top: 34px; color: #223038; letter-spacing: -0.43px; }
    .share-text { width: 228px; }
    .icon { fill: #1f2d34; display: block; }
    .link { fill: none; stroke: #1f2d34; stroke-width: 3; stroke-linecap: round; margin-top: 1px; }
    .twitter { margin-left: 26px; }
    .facebook { margin-left: 26px; }
    .linkedin { margin-left: 26px; }
    .contact { margin: 18px 0 0; line-height: 32.3px; color: #223038; letter-spacing: -0.29px; white-space: nowrap; }
    .mail { font-weight: 700; letter-spacing: -0.57px; -webkit-text-stroke: 0; }
    .made { margin: 19px 0 0; line-height: 20px; font-size: 15px; color: #4e5a60; letter-spacing: -0.02px; }

    .filter { display: grid; grid-template-columns: 42px 420px 1fr; height: 236px; box-sizing: border-box; padding-top: 24px; }
    .filter-off { width: 42px; height: 42px; margin-top: 38px; }
    .off-ring { fill: #fff; stroke: #d9dada; stroke-width: 1; }
    .off-funnel { fill: #b5b5b5; }
    .off-slash { stroke: #b5b5b5; stroke-width: 2; }
    .off-gap { stroke: #fff; stroke-width: 1.5; }
    .field { margin-left: 18px; }
    .caption { font-family: "DejaVu Sans Mono", monospace; font-size: 14px; line-height: 20px; letter-spacing: 1.32px; color: #59646a; margin-bottom: 9px; }
    .slider { position: relative; margin: 51px 0 0 64.5px; height: 15px; width: 931.5px; display: grid; grid-template-columns: repeat(5, 1fr); column-gap: 2px; border-bottom: 1px solid #d4d8d8; }
    .step { background: #7f8a8b; }
    .knob { position: absolute; top: -4px; width: 22px; height: 22px; border-radius: 50%; background: #283c40; box-shadow: 0 0 0 1px #fff; }
    .knob.low { left: -8.2px; }
    .knob.high { right: -13.5px; }
    .bound { position: absolute; top: -28px; width: 80px; text-align: center; font-size: 19px; font-weight: 300; line-height: 24px; color: #2f7474; -webkit-text-stroke: 0.2px currentColor; }
    .bound.low { left: -37px; }
    .bound.high { right: -42px; }
    .marker { position: absolute; left: 63.47%; top: -57px; width: 300px; margin-left: -150px; display: flex; flex-direction: column; align-items: center; font-size: 17px; line-height: 20px; font-weight: 300; color: #505a60; white-space: nowrap; letter-spacing: -0.2px; -webkit-text-stroke: 0.2px currentColor; }
    .pin { width: 0; height: 0; margin-top: 3px; border: 5.5px solid transparent; border-top: 7.5px solid #000; border-bottom: 0; }

    .title { margin: 0; padding-top: 1px; font-family: Lato, sans-serif; font-weight: 300; font-size: 44px; line-height: 56px; color: #1f2d34; white-space: nowrap; font-variant-ligatures: none; letter-spacing: 0.13px; -webkit-text-stroke: 0.5px currentColor; }
    .copy { margin: 18.5px 0 117px; font-weight: 300; font-size: 24px; line-height: 36.2px; color: #505a60; white-space: nowrap; letter-spacing: -0.125px; -webkit-text-stroke: 0.2px currentColor; }
    .last { letter-spacing: -0.2px; }
    .selects { display: flex; gap: 6px; }
    .statement { margin: 50px 0 47px; font-size: 24px; line-height: 32px; font-weight: 700; color: #1f2d34; letter-spacing: -0.27px; white-space: nowrap; }
    .row { display: flex; align-items: center; height: 66.7px; padding-left: 3px; font-size: 24px; }
    .level { width: 259px; color: #505a60; font-weight: 300; letter-spacing: -0.1px; -webkit-text-stroke: 0.2px currentColor; }
    .bar { height: 10.5px; margin-top: 3px; background: #6890a5; }
    .amount { margin-left: 22px; margin-top: 2px; color: #6890a5; font-weight: 700; letter-spacing: 0.15px; }
    .source { margin: 70px 0 0; font-size: 21.2px; line-height: 30px; font-weight: 600; color: #1f2d34; letter-spacing: -0.53px; }
    .source-link { color: #3d7977; text-decoration: underline; text-decoration-thickness: 2px; text-underline-offset: 3px; }
  `;

  private plus() {
    return html`<svg class="plus" width="21" height="21"><path d="M10.5 0v21M0 10.5h21"></path></svg>`;
  }

  private indicator(item: Indicator) {
    return html`
      <div class=${classMap({ indicator: true, on: !!item.selected })}>
        <span class="radio"></span>
        <div>
          <div class="names"><span>${item.name}</span><span>${item.value}</span></div>
          <div class="scale">
            ${[0, 1, 2, 3, 4].map((i) =>
              i === item.bucket
                ? html`<span class="cell" style="background:${item.color}"></span>`
                : html`<span class="cell"></span>`,
            )}
          </div>
        </div>
      </div>
    `;
  }

  render() {
    return html`
      <div class="page">
        <aside class="sidebar">
          <div class="search">
            <span>Search for address or place...</span>
            <svg class="lens" width="27" height="27"><circle cx="10" cy="10" r="8.2"></circle><path d="M16 16l9 9.3"></path></svg>
          </div>
          <div class="accordion">
            <div class="head first"><span>Vulnerability</span>${this.plus()}</div>
            <div class="head open"><span>Race</span></div>
            <div class="region">Tract 7316, Worcester County, MA</div>
            <div class="indicators">${indicators.map((i) => this.indicator(i))}</div>
            ${closedSections.map((s) => html`<div class="head"><span>${s}</span>${this.plus()}</div>`)}
          </div>
          <div class="share">
            <span class="share-text">Share your findings:</span>
            <svg class="link" width="26" height="27" viewBox="0 0 26 27"><path d="M11.5 5.8l3.3-3.1a5.6 5.6 0 0 1 8.1 7.8l-5.2 5.3a5.6 5.6 0 0 1-8.1-.4M14.3 21.2L11 24.3a5.6 5.6 0 0 1-8.1-7.8l5.2-5.3a5.6 5.6 0 0 1 8.1.4"></path></svg>
            <svg class="icon twitter" width="32" height="26" viewBox="0 2.5 24 19.5"><path d="M23.95 4.57a10 10 0 0 1-2.82.77 4.96 4.96 0 0 0 2.16-2.72c-.95.55-2 .96-3.13 1.18a4.92 4.92 0 0 0-8.38 4.48C7.69 8.1 4.07 6.13 1.64 3.16a4.92 4.92 0 0 0 1.52 6.57 4.9 4.9 0 0 1-2.23-.61v.06c0 2.38 1.7 4.37 3.95 4.82a5 5 0 0 1-2.21.09 4.94 4.94 0 0 0 4.6 3.42A9.87 9.87 0 0 1 0 19.54a13.99 13.99 0 0 0 7.55 2.21c9.05 0 14-7.5 14-13.98 0-.21 0-.42-.02-.63a9.94 9.94 0 0 0 2.46-2.55z"></path></svg>
            <svg class="icon facebook" width="14" height="27" viewBox="0 0 14 27"><path d="M4.2 27V14.8H0v-4.6h4.2V6.6C4.2 2.4 6.6 0 10.4 0c1.8 0 3 .15 3.6.25v4.2h-2.6c-1.9 0-2.3.9-2.3 2.3v3.45h4.7l-.6 4.6H9.1V27z"></path></svg>
            <svg class="icon linkedin" width="27" height="26" viewBox="0 0 27 26"><path d="M.5 8.5h5.4V25.5H.5zM3.2 0a3.1 3.1 0 1 1 0 6.2 3.1 3.1 0 0 1 0-6.2zM9.2 8.5h5.2v2.3c.8-1.5 2.6-2.8 5.2-2.8 5.5 0 6.9 3.5 6.9 8.2v9.3h-5.4v-8.3c0-2 0-4.5-2.8-4.5s-3.6 2.1-3.6 4.4v8.4H9.2z"></path></svg>
          </div>
          <p class="contact">For more information, contact Surgo's COVID-19<br />team at <span class="mail">covid19@surgoventures.org</span></p>
          <p class="made">Designed &amp; Developed by Darkhorse Analytics</p>
        </aside>

        <main>
          <region-map></region-map>
          <section class="filter">
            <svg class="filter-off" viewBox="0 0 42 42">
              <circle class="off-ring" cx="21" cy="21" r="20.5"></circle>
              <path class="off-funnel" d="M13.5 10.7h16.5L23.6 19.5v11.8l-5-3.3v-8.5z"></path>
              <path class="off-gap" d="M10.3 9.2l22 21.5"></path>
              <path class="off-slash" d="M8.8 10.2l22.7 22"></path>
            </svg>
            <div class="field">
              <div class="caption">ONLY SHOW REGIONS WITH</div>
              <select-box value="White Population"></select-box>
            </div>
            <div class="slider">
              ${[1, 2, 3, 4, 5].map(() => html`<span class="step"></span>`)}
              <span class="knob low"></span><span class="knob high"></span>
              <span class="bound low">0%</span><span class="bound high">100%</span>
              <div class="marker"><span>Tract 7316, Worcester County, MA</span><span class="pin"></span></div>
            </div>
          </section>

          <h2 class="title">Breakdown of White Population by Vulnerability</h2>
          <p class="copy">
            Even within less vulnerable areas, racial minorities may live in neighborhoods that are more vulnerable than the surrounding areas. We<br />
            measure racial composition and vulnerability at a very granular level - the census tract, which is a neighborhood of approximately 5,000<br />
            <span class="last">people. This way, we can see where different racial groups are experiencing vulnerability in different ways, even within the same county.</span>
          </p>
          <div class="caption">FOCUS ON</div>
          <div class="selects">
            <select-box value="Massachusetts"></select-box>
            <select-box value="Worcester County"></select-box>
          </div>
          <p class="statement">7.8% of the White population in Worcester County is classified as Very High or High vulnerability</p>
          ${breakdown.map(
            (b) => html`
              <div class="row">
                <span class="level">${b.label}</span>
                <span class="bar" style="width:${b.width}px"></span>
                <span class="amount">${b.value}</span>
              </div>
            `,
          )}
          <p class="source">Source: <a class="source-link">U.S. Census Bureau</a></p>
        </main>
      </div>
    `;
  }
}
